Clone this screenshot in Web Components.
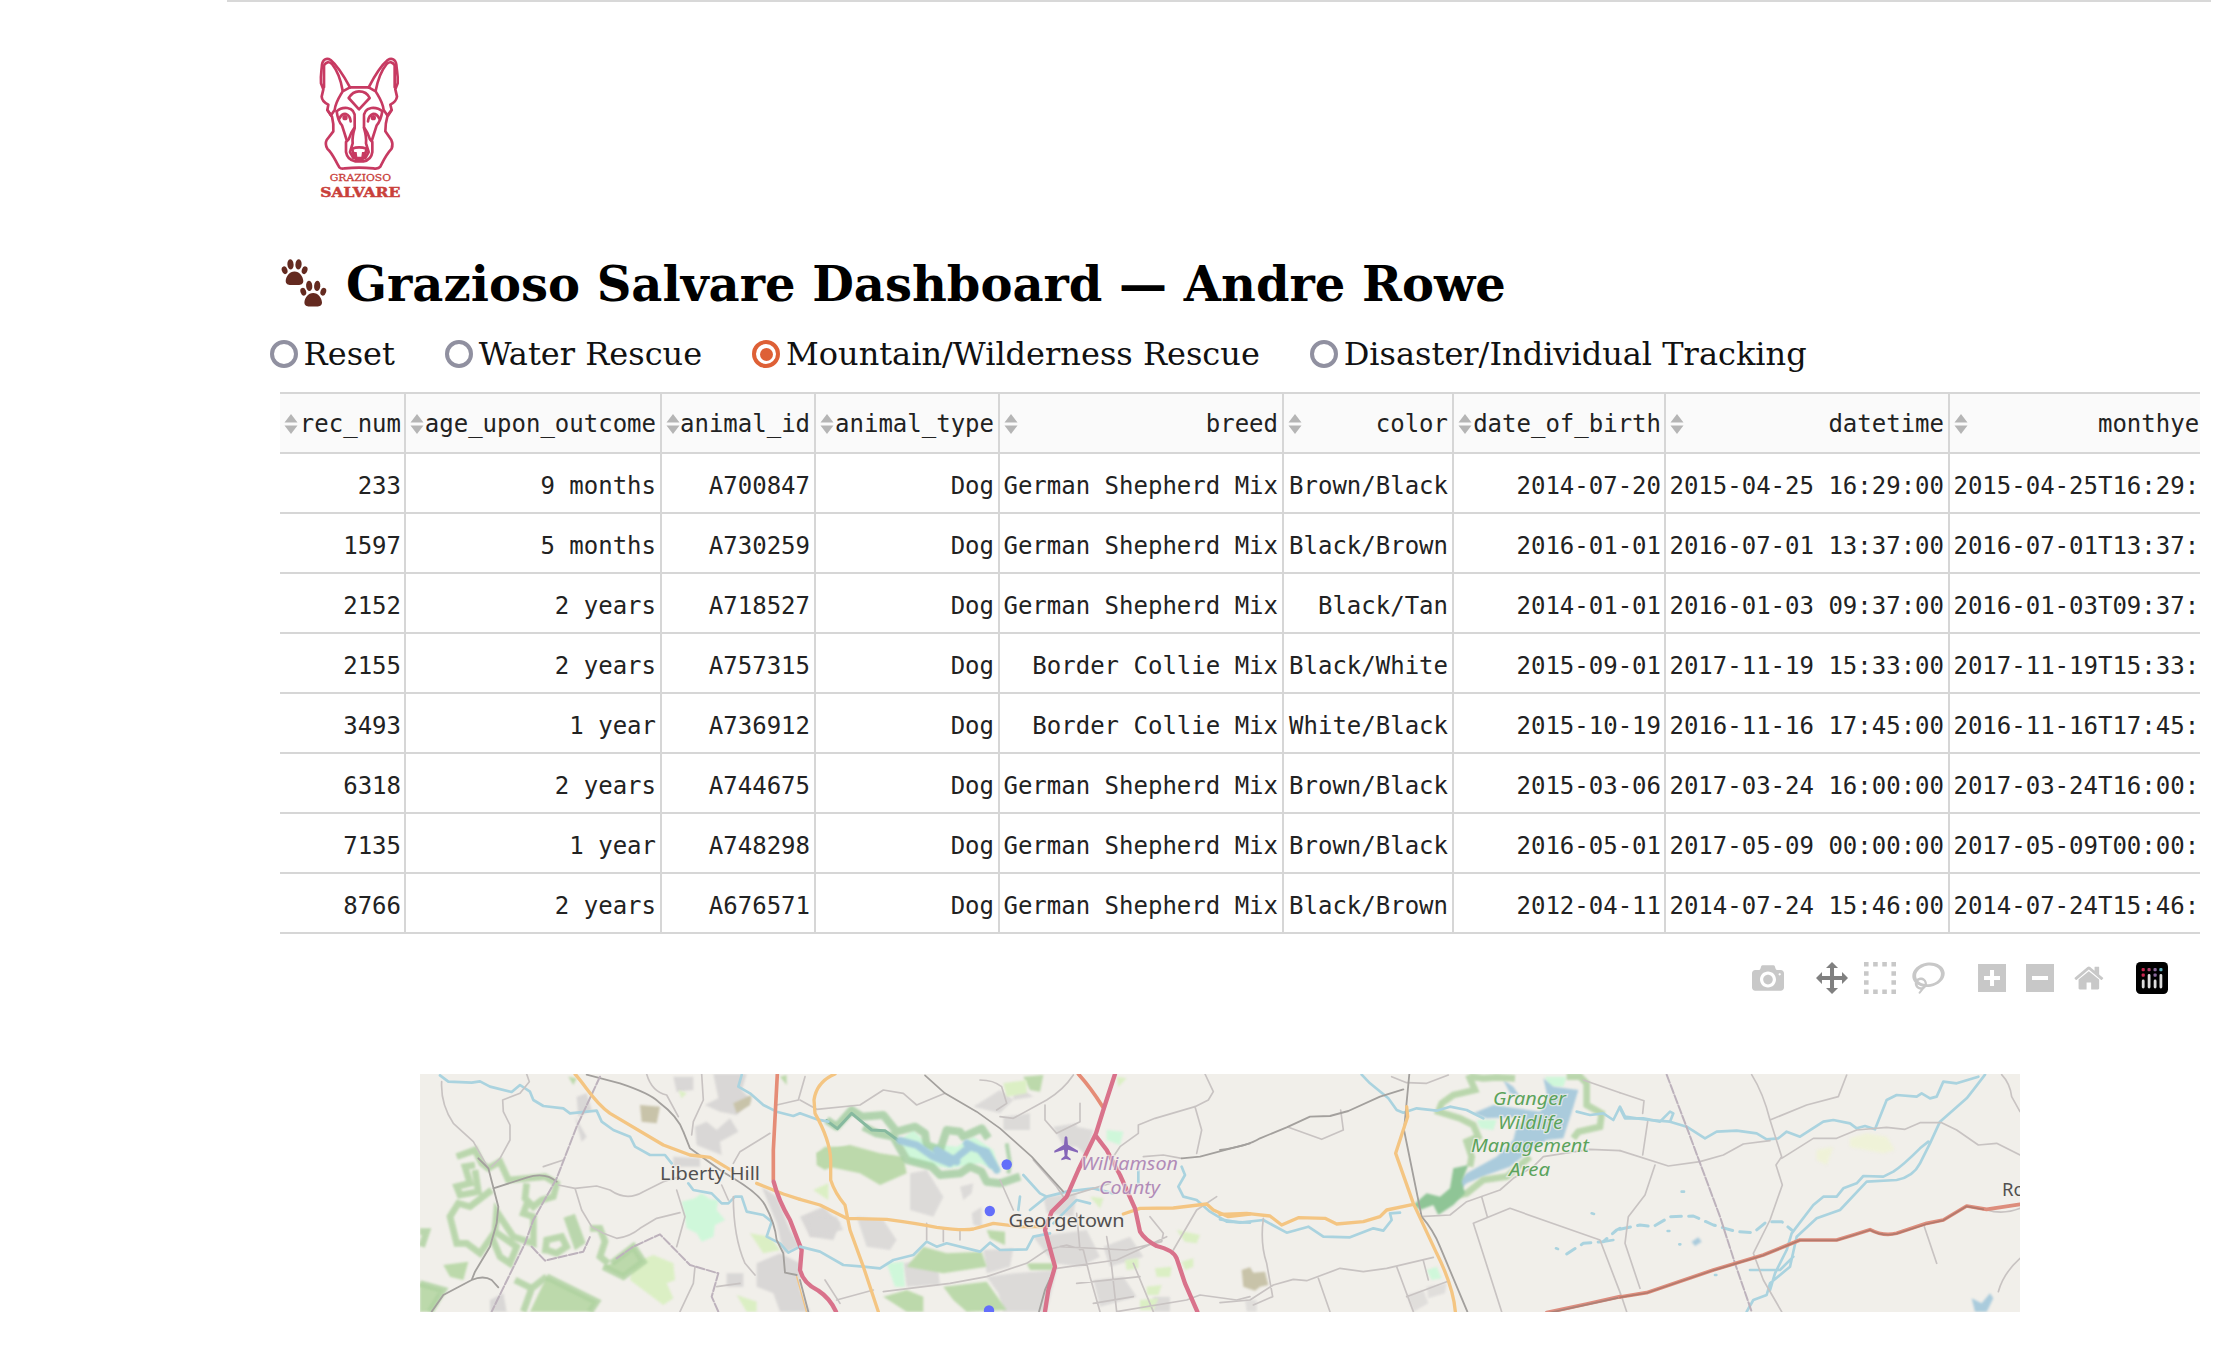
<!DOCTYPE html>
<html lang="en">
<head>
<meta charset="utf-8">
<title>Grazioso Salvare Dashboard</title>
<style>
html,body{margin:0;background:#fff;height:1348px;overflow:hidden}
</style>
</head>
<body>
<rescue-dashboard></rescue-dashboard>
<script>
const define=(name,html)=>customElements.define(name,class extends HTMLElement{
  connectedCallback(){
    if(this.shadowRoot)return;
    const root=this.attachShadow({mode:'open'});
    root.innerHTML=(typeof html==='function'?html(this):html).trim();
  }
});

/* Brand mark: shepherd head with the two-line name */
define('brand-logo',`
<style>:host{display:block;width:84px;height:146px}svg{display:block;overflow:visible}</style>
<svg width="84" height="146" viewBox="324 165 252 438">
 <g fill="none" stroke="#c73a62" stroke-width="8" stroke-linejoin="round" stroke-linecap="round">
  <path d="M420 262H476"/>
  <path d="M420 262C400 225 380 195 362 180C350 172 338 178 336 194C335 212 331 225 333 250L340 268L335 290Q336 305 355 314L352 330L363 346"/>
  <path d="M476 262C495 225 515 195 533 180C545 172 557 178 559 194C560 212 565 225 563 250L556 268L561 290Q559 305 541 314L545 330L532 346"/>
  <path d="M342 262V196Q352 180 366 192C382 212 392 236 398 272"/>
  <path d="M554 262V196Q544 180 530 192C514 212 504 236 497 272"/>
  <path d="M420 262L398 274C385 296 376 308 374 330L363 346M476 262L497 274C510 296 519 308 521 330L532 346"/>
  <path d="M352 330L366 350Q372 374 370 394L350 420Q344 432 352 446C370 462 376 484 388 502Q394 508 404 505Q447 501 490 505Q505 508 511 500C520 482 528 464 545 446Q550 432 544 420L526 394Q526 370 532 350L545 330"/>
  <path d="M447 328L416 294Q428 274 447 274Q470 274 479 294Z"/>
  <path d="M380 334Q392 322 412 324Q436 328 434 354V382Q422 398 416 418L408 426V456Q412 480 436 484H460Q484 480 487 456V426L480 418Q474 398 462 382V354Q460 328 484 324Q504 322 517 334"/>
  <path d="M380 334Q384 364 396 376L410 420M517 334Q512 364 500 376L486 420"/>
  <path d="M388 356Q396 340 408 342Q420 346 422 364M508 356Q500 340 488 342Q476 346 474 364"/>
  <path d="M434 384Q426 410 428 430L420 456L430 474M462 384Q470 410 468 430L476 456L466 474"/>
  <path d="M426 446Q447 438 470 446L462 474Q447 486 434 474L426 446Z"/>
 </g>
 <path d="M426 456L440 456L442 470H454L456 456L470 456L462 478Q447 492 434 478Z" fill="#c73a62"/>
 <circle cx="405" cy="353" r="8" fill="#c73a62"/><circle cx="490" cy="353" r="8" fill="#c73a62"/>
 <g fill="#c9403a" stroke="#c9403a" font-family="'DejaVu Serif','Liberation Serif',serif">
  <text x="359" y="543" font-size="25" stroke-width=".8" textLength="184" lengthAdjust="spacingAndGlyphs">GRAZIOSO</text>
  <text x="331" y="590" font-size="41" stroke-width="1.500" font-weight="700" textLength="240" lengthAdjust="spacingAndGlyphs">SALVARE</text>
 </g>
</svg>`);

define('paw-prints',`
<style>:host{display:block;width:48px;height:48px;flex:none}svg{display:block}</style>
<svg width="48" height="48" viewBox="0 0 48 48" fill="#642a20"><defs><g id="p">
<path d="M13.500 12.500c-5 0-8.500 5-8.800 9.500 0 3 2.500 4 5 4h7.600c2.500 0 5-1 5-4-.3-4.500-3.800-9.500-8.800-9.500z"/>
<ellipse cx="3.600" cy="11.200" rx="2.800" ry="4" transform="rotate(-18 3.600 11.200)"/>
<ellipse cx="9.500" cy="5.400" rx="3.100" ry="5.200" transform="rotate(-5 9.500 5.400)"/>
<ellipse cx="17.500" cy="5.400" rx="3.100" ry="5.200" transform="rotate(5 17.500 5.400)"/>
<ellipse cx="23.600" cy="11.200" rx="2.800" ry="4" transform="rotate(18 23.600 11.200)"/></g></defs>
<use href="#p"/><use href="#p" transform="translate(18.700 21.500)"/></svg>`);

define('page-title',`
<style>:host{display:flex;align-items:flex-start;height:60px}
paw-prints{margin:0 17px 0 0}
h1{margin:-5px 0 0;font:700 48px/60px 'DejaVu Serif',serif;color:#000;white-space:nowrap}</style>
<paw-prints></paw-prints><h1><slot></slot></h1>`);

define('radio-option',`
<style>:host{display:flex;align-items:center;height:40px;font:32px/40px 'DejaVu Serif',serif;color:#111;white-space:nowrap}
i{box-sizing:border-box;width:28px;height:28px;border:4px solid #9090a0;border-radius:50%;margin-right:5.600px;display:flex;align-items:center;justify-content:center}
:host([checked]) i{border-color:#de6036}
:host([checked]) i::after{content:"";width:13px;height:13px;border-radius:50%;background:#de6036}
span{margin-top:-1px}
</style><i></i><span><slot></slot></span>`);

define('rescue-filter',`
<style>:host{display:flex;gap:50.300px}</style>
<radio-option>Reset</radio-option><radio-option>Water Rescue</radio-option>
<radio-option checked>Mountain/Wilderness Rescue</radio-option>
<radio-option>Disaster/Individual Tracking</radio-option>`);

const COLS=[['rec_num',126],['age_upon_outcome',256],['animal_id',154],['animal_type',184],['breed',284],['color',170],['date_of_birth',212],['datetime',284],['monthyear',284]];
const G='German Shepherd Mix',B='Border Collie Mix';
const ROWS=[
['233','9 months','A700847','Dog',G,'Brown/Black','2014-07-20','2015-04-25 16:29:00'],
['1597','5 months','A730259','Dog',G,'Black/Brown','2016-01-01','2016-07-01 13:37:00'],
['2152','2 years','A718527','Dog',G,'Black/Tan','2014-01-01','2016-01-03 09:37:00'],
['2155','2 years','A757315','Dog',B,'Black/White','2015-09-01','2017-11-19 15:33:00'],
['3493','1 year','A736912','Dog',B,'White/Black','2015-10-19','2016-11-16 17:45:00'],
['6318','2 years','A744675','Dog',G,'Brown/Black','2015-03-06','2017-03-24 16:00:00'],
['7135','1 year','A748298','Dog',G,'Brown/Black','2016-05-01','2017-05-09 00:00:00'],
['8766','2 years','A676571','Dog',G,'Black/Brown','2012-04-11','2014-07-24 15:46:00']];

define('sort-arrows',`
<style>:host{display:block;width:14px;height:20px;flex:none;white-space:normal}svg{display:block}</style>
<svg width="14" height="20" viewBox="0 0 14 20" fill="#b5b5b5"><path d="M7 0L13.500 8.500H.5ZM7 20L.5 11.500H13.500Z"/></svg>`);

define('animal-table',()=>`
<style>
:host{display:block;width:1920px;overflow:hidden;border-top:2px solid #d6d6d6}
.grid{display:grid;grid-template-columns:${COLS.map(c=>c[1]+'px').join(' ')};grid-template-rows:repeat(9,60px);width:max-content;
 font:24px/28px 'DejaVu Sans Mono',monospace;color:#222}
.c{box-sizing:border-box;border-bottom:2px solid #d6d6d6;border-right:2px solid #d6d6d6;padding:5px 4px 0 4px;display:flex;align-items:center;justify-content:flex-end;white-space:nowrap}
.c:nth-child(9n+1),.c:nth-child(9n+7){padding-right:3px}
.h{background:#fafafa;justify-content:space-between;padding-top:2px}
</style>
<div class="grid">${COLS.map(c=>`<div class="c h"><sort-arrows></sort-arrows><span>${c[0]}</span></div>`).join('')}${
ROWS.map(r=>[...r,r[7].replace(' ','T')].map(v=>`<div class="c">${v}</div>`).join('')).join('')}</div>`);

const FLIP='transform="matrix(1 0 0 -1 0 850)"';
const ICONS={
camera:[1000,'m500 450c-83 0-150-67-150-150 0-83 67-150 150-150 83 0 150 67 150 150 0 83-67 150-150 150z m400 150h-120c-16 0-34 13-39 29l-31 93c-6 15-23 28-40 28h-340c-16 0-34-13-39-28l-31-94c-6-15-23-28-40-28h-120c-55 0-100-45-100-100v-450c0-55 45-100 100-100h800c55 0 100 45 100 100v450c0 55-45 100-100 100z m-400-550c-138 0-250 112-250 250 0 138 112 250 250 250 138 0 250-112 250-250 0-138-112-250-250-250z m365 380c-19 0-35 16-35 35 0 19 16 35 35 35 19 0 35-16 35-35 0-19-16-35-35-35z'],
pan:[1000,'m1000 350l-187 188 0-125-250 0 0 250 125 0-188 187-187-187 125 0 0-250-250 0 0 125-188-188 186-187 0 125 252 0 0-250-125 0 187-188 188 188-125 0 0 250 250 0 0-126 187 188z'],
box:[1000,'m0 850l0-143 143 0 0 143-143 0z m286 0l0-143 143 0 0 143-143 0z m285 0l0-143 143 0 0 143-143 0z m286 0l0-143 143 0 0 143-143 0z m-857-286l0-143 143 0 0 143-143 0z m857 0l0-143 143 0 0 143-143 0z m-857-285l0-143 143 0 0 143-143 0z m857 0l0-143 143 0 0 143-143 0z m-857-286l0-143 143 0 0 143-143 0z m286 0l0-143 143 0 0 143-143 0z m285 0l0-143 143 0 0 143-143 0z m286 0l0-143 143 0 0 143-143 0z'],
lasso:[1031,'m1018 538c-36 207-290 336-568 286-277-48-473-256-436-463 10-57 36-108 76-151-13-66 11-137 68-183 34-28 75-41 114-42l-55-70 0 0c-2-1-3-2-4-3-10-14-8-34 5-45 14-11 34-8 45 4 1 1 2 3 2 5l0 0 113 140c16 11 31 24 45 40 4 3 6 7 8 11 48-3 100 0 151 9 278 48 473 255 436 462z m-624-379c-80 14-149 48-197 96 42 42 109 47 156 9 33-26 47-66 41-105z m-187-74c-19 16-33 37-39 60 50-32 109-55 174-68-42-25-95-24-135 8z m360 75c-34-7-69-9-102-8 8 62-16 128-68 170-73 59-175 54-244-5-9 20-16 40-20 61-28 159 121 317 333 354s407-60 434-217c28-159-121-318-333-355z'],
plus:[875,'m1 787l0-875 875 0 0 875-875 0z m687-500l-187 0 0-187-125 0 0 187-188 0 0 125 188 0 0 187 125 0 0-187 187 0 0-125z'],
minus:[875,'m0 788l0-876 875 0 0 876-875 0z m688-500l-500 0 0 125 500 0 0-125z'],
home:[928.6,'m786 296v-267q0-15-11-26t-25-10h-214v214h-143v-214h-214q-15 0-25 10t-11 26v267q0 1 0 2t0 2l321 264 321-264q1-1 1-4z m124 39l-34-41q-5-5-12-6h-2q-7 0-12 3l-386 322-386-322q-7-4-13-4-7 2-12 7l-35 41q-4 5-3 12t6 11l401 334q18 15 42 15t43-15l136-114v109q0 8 5 13t13 5h107q8 0 13-5t5-13v-227l122-102q5-5 6-12t-4-11z']};
define('mode-icon',el=>{
 const n=el.getAttribute('name');
 const css='<style>:host{display:block;height:32px}svg{display:block}</style>';
 if(n==='plotly')return css+`<svg width="32" height="32" viewBox="0 0 32 32"><rect width="32" height="32" rx="4.500"/>
 <g fill="#c8274f"><rect x="5.600" y="6" width="3.200" height="3.200" rx="1"/><rect x="5.600" y="11.500" width="3.200" height="3.200" rx="1"/></g>
 <rect x="11.500" y="6" width="3.200" height="3.200" rx="1" fill="#b0446f"/><rect x="17.500" y="6" width="3.200" height="3.200" rx="1" fill="#8a6a9c"/><rect x="17.500" y="11.500" width="3.200" height="3.200" rx="1" fill="#8a6a9c"/><rect x="23.300" y="6" width="3.200" height="3.200" rx="1" fill="#5fb0c0"/>
 <path d="M7.200 19V25M13.100 13.300V25M19.100 19V25M24.900 13.300V25" stroke="#ddd" stroke-width="2.800" stroke-linecap="round"/></svg>`;
 const [w,d]=ICONS[n];
 return css+`<svg width="${w*.032}" height="32" viewBox="0 0 ${w} 1000" fill="${n==='pan'?'#808080':'#c8c8c8'}"><path d="${d}" ${FLIP}/></svg>`;
});
define('mode-bar',`
<style>:host{display:flex;justify-content:flex-end;gap:32px}div{display:flex;gap:16px}.z{gap:20px;margin-left:1px}</style>
<div><mode-icon name="camera"></mode-icon></div>
<div><mode-icon name="pan"></mode-icon><mode-icon name="box"></mode-icon><mode-icon name="lasso"></mode-icon></div>
<div class="z"><mode-icon name="plus"></mode-icon><mode-icon name="minus"></mode-icon><mode-icon name="home"></mode-icon></div>
<div><mode-icon name="plotly"></mode-icon></div>`);

/* Street map, drawn in four tiles of one third pixel units */
define('outcome-map',`
<style>
:host{display:block;width:1600px;height:238px;overflow:hidden}
svg{display:block;background:#f1efea}
path{fill:none;stroke-linejoin:round;stroke-linecap:round}
.w{stroke:#aad3df;stroke-width:8}.wa{fill:#aacbdc}
.y{stroke:#f4c582;stroke-width:10}.r{stroke:#d9728b;stroke-width:13}.o{stroke:#e58c76;stroke-width:11}
.k{stroke:#a3a09d;stroke-width:5.500}.g{stroke:#c8c3c2;stroke-width:5}.d{stroke:#bdb2bc;stroke-width:6;stroke-dasharray:26 7}
.gr{stroke:#add19e;stroke-width:20;stroke-linejoin:miter;stroke-linecap:butt;opacity:.8}.gf{fill:#bcd9ab}.lf{fill:#dbefc4}.u{fill:#d9d7d6}.m{fill:#cff7da}.b{fill:#c8c3a9}
.gr,.gf,.lf,.u,.m,.b,.wa{filter:blur(2.500px)}
text{font-family:'Noto Sans','Open Sans',sans-serif}
</style>
<svg width="1600" height="238" viewBox="420 1074 1600 238">
<g transform="translate(400 1050) scale(.33333)">
 <path class="u" d="M940 72H1040L1025 120L1055 150L1010 195L960 185L915 165L955 145ZM885 230L920 215L950 240L990 205L1015 245L960 275L965 315L890 285ZM820 320L900 325L900 350H820ZM1085 410L1130 440L1170 540L1200 590L1150 610L1130 520ZM1200 500L1270 470L1320 520L1300 570L1230 560ZM1070 640L1140 610L1200 640V720L1230 785H1140L1120 730L1070 710ZM820 80H880V120L830 125ZM530 140L560 130L575 180L535 200ZM525 200L560 260L545 275ZM270 750L310 730L320 785H270ZM980 670H1030V710H980Z"/>
 <path class="b" d="M720 165L780 170L770 220L725 215ZM1000 160L1055 135L1050 165L1010 190Z"/>
 <path class="m" d="M845 455L885 445L905 430L930 448L955 450L950 480L975 510L945 525L940 560L905 575L890 550L860 535Z"/>
 <path class="lf" d="M700 640L760 615L820 640L825 690L800 700L820 745L790 765L750 735L690 690ZM1010 735L1070 755V785H1040ZM1050 550L1110 560L1140 600L1090 610ZM1240 420L1285 400V450ZM835 120L860 130L845 145Z"/>
 <path class="gf" d="M440 680L590 755L570 785H390ZM60 700L130 720L90 785H60ZM635 640L700 590L730 635L670 680L610 650ZM130 645L205 635L190 690L150 680ZM1250 310L1275 290L1350 290V320L1275 360L1250 345ZM505 80L530 85L520 105ZM1140 80L1160 75V105Z"/>
 <path class="gr" d="M170 320L225 300L245 340L265 355L300 335L325 390L435 380L470 400L460 440L425 450L400 470L375 445L380 400M225 345L195 350L210 400L170 410L180 435L235 425L225 360M275 420L210 470L175 460L150 500L170 580L200 580L240 610L275 560L300 620L330 640L350 590L285 545L290 485L310 515L340 560L400 580V500L370 490L385 450M435 610L440 570L485 560L500 590L470 610L440 600M500 500L530 585L545 575L515 495M570 535H600L615 575L600 620L625 640M60 545L80 545L65 590M345 690L395 715L370 785M395 715L440 680M440 680L590 755L570 785M60 700L130 720L90 785M635 640L700 590L730 635L670 680L610 650"/>
 <path class="w" d="M120 76L145 95L215 98L240 94L270 110L335 126L360 105L390 125L400 150L430 168L490 175L510 190L590 182L605 215L640 240L690 260L705 290L750 315L795 315L815 340M865 400L880 420L935 430L965 460H985L1005 440H1025L1040 485L1090 495L1115 515L1100 560L1140 580L1165 608L1200 590M1025 75L1015 110L1050 130L1090 165L1130 185L1180 198L1200 190"/>
 <path class="g" d="M125 95C122 150 140 190 160 220L220 275L265 355M380 72L388 95L360 130L308 150L310 185L330 225V270L300 325L275 350M475 405L525 415L590 408L630 420Q680 455 730 425L790 395L840 380M525 415L545 480L575 530L610 550L650 565Q690 560 720 535L770 505L840 488M740 72Q755 125 800 135L835 200M905 72L910 150L880 215L875 255M1215 80L1195 150L1130 165M1000 340L1020 305L1110 250M830 420L855 500L830 590M1000 440Q1000 560 1035 640L1065 675M950 710L1020 700M885 650L880 700L840 785M965 405L985 450M430 350L490 330"/>
 <path class="k" d="M560 74L660 100Q750 130 775 155Q835 200 850 245L870 295L960 360L1000 385Q1075 430 1095 465Q1125 520 1130 570L1150 610L1155 668L1190 675M280 415L380 383Q435 365 470 395M235 325L265 355L295 470L290 520L270 590L225 665L215 690L130 735L95 785M215 690Q250 675 275 690L295 712"/>
 <path class="d" d="M600 80L530 230L470 385L400 510L375 580L275 785M395 590L435 632L550 605L570 560M650 625L700 590L780 553L870 645L955 670L935 740L955 785"/>
 <path class="y" d="M525 72C560 110 580 155 630 190L790 285L870 315L930 322L1000 365M1070 400L1150 432L1200 448"/>
 <path class="k" d="M1200 690L1225 785"/><path class="y" style="stroke-width:4" d="M1190 680L1219 785"/>
 <path class="o" d="M1132 72L1120 300V390"/><path class="r" d="M1121 395Q1135 450 1170 510L1205 600L1200 660Q1210 700 1255 722Q1290 745 1308 785"/>
</g>
<g transform="translate(800 1050) scale(.33333)">
 <path class="u" d="M330 370L380 360L430 440L400 500L330 480ZM480 410L520 400L515 430L490 450ZM515 490L545 470V530L520 525ZM170 500L250 510L290 570L270 600L200 590ZM550 600L640 595L630 650L560 670ZM310 640L410 620L420 705L320 710ZM560 680L640 670L770 660L740 785H610L595 730ZM640 100L700 140L640 150ZM610 200L690 190V240L610 240ZM20 495L110 500L130 540L30 560ZM700 560L860 540L900 620L840 650L760 640ZM830 230L880 240L860 320L820 280ZM730 440L830 430L820 500L740 490ZM910 590L990 560L1030 620L930 650ZM880 690L970 680L1010 740L900 770ZM520 170L600 120L640 150L600 190ZM760 230L830 220V290H790ZM1060 740L1110 740V785H1060Z" opacity=".85"/>
 <path class="gf" d="M50 310L150 285L240 310L310 320L320 370L240 405L180 370L60 345ZM370 590L440 610L545 605L560 650L430 670L320 650ZM430 710L560 695L620 780L500 785L460 750ZM670 80L730 75L720 125L690 120ZM560 540L615 545V585L570 565ZM250 740L320 720L370 740V785H320ZM680 640L760 640V660H690Z"/>
 <path class="m" d="M300 270L340 240L380 280L470 290L520 260L580 300L600 370L540 340L450 355L330 340ZM920 240L970 245L960 285L920 270ZM260 640L310 635L315 710H285Z"/>
 <path class="lf" d="M975 630L1015 625L1015 655L980 660ZM1065 655L1115 650L1110 680L1070 680ZM1040 710L1085 705L1075 735H1040ZM1020 750L1075 745L1060 780H1020ZM1130 540L1200 555L1190 580L1155 575ZM1145 635L1180 625V650L1155 660ZM870 440L910 445L900 475ZM950 80L980 85L955 110ZM610 100L680 90V130L620 140Z"/>
 <path class="gr" style="stroke:#a2cda0;stroke-width:24;stroke-linejoin:round" d="M80 210L110 230L155 180L185 200L250 195L290 245L345 230L375 250L380 285L420 300L440 240L480 245L490 260L545 235L565 265M190 230L230 250L280 260L320 330L395 350L420 375L480 370L510 350L545 365L560 395L600 400L660 380"/>
 <path class="gr" style="stroke:#a2cda0;stroke-width:12" d="M620 280L630 340L625 370"/>
 <path style="stroke:#86b99f;stroke-width:9" d="M80 212L112 236L155 190L215 240L255 242L300 275"/>
 <path style="stroke:#a4cbdc;stroke-width:22;filter:blur(2.500px)" d="M300 272L350 285L400 320L450 340L485 310L510 290L560 305L590 360M410 300L470 335M500 280L540 300L575 345"/>
 <path class="w" d="M0 190L50 208L85 215M670 375L720 430L740 440L800 425L880 415L940 430M660 440L655 480M740 440L690 480M0 590L60 605L130 645L190 650L240 655L280 630L340 615L380 575L410 590L440 580L540 605L570 578L600 600L680 598L700 560L750 550M1145 350L1155 375L1135 410L1150 440L1190 450L1230 485L1280 515L1350 518M760 520L830 450L870 460M1015 360V400"/>
 <path class="g" d="M0 150L50 178L180 165L250 120L310 130L350 165L435 130M540 90Q580 90 605 110L620 160L590 180M820 75Q790 120 740 150L640 205L600 200M735 165V210L770 250L840 215V160M1215 72L1240 125L1225 150L1185 170L1065 205L1015 225V250L960 290L940 320M1185 170L1205 240L1190 310M600 390L640 480M700 330L770 410L790 440M250 725L450 700L560 680L680 640L740 600L800 585L850 600L870 680L900 785M770 655L950 630L1100 560M920 560L935 650L950 785M830 490L840 600M1050 500L1090 550L1085 575L980 600L780 590M1120 600L1190 480L1250 440M930 400L800 440M1000 640L1060 785M110 750L220 720M75 690L120 760M380 520V570M430 535V575M480 540V570M950 785L1160 750L1200 735L1310 750L1350 740M830 700L1020 680M880 760L1000 740M1030 320L1090 315L1145 325"/>
 <path class="k" style="stroke-width:5" d="M375 76L435 130L530 185L600 235L695 320L790 425M1145 325L1200 320L1350 280"/>
 <path class="y" d="M105 72Q50 95 42 150L45 190Q90 270 92 330V390Q105 430 135 465L150 540L190 650L235 785M0 448L60 465L140 505L260 508Q350 520 410 532Q490 543 520 537L580 520L660 530H740M970 492L1020 475L1120 474L1220 462L1240 480L1285 500L1350 492"/>
 <path class="o" d="M835 72Q870 110 908 170"/>
 <path class="k" d="M762 660L735 720L717 785"/>
 <path class="r" d="M945 72L910 180L888 250L835 360L800 440L755 485L735 540L765 650L745 720L735 785M888 258L920 300L960 375L1005 475L1020 545Q1035 570 1070 588Q1120 600 1130 625L1155 700L1192 785"/>
 <path style="fill:#8566b8" d="M794 262Q798 256 802 262L804 284L834 302V308L804 299L802 318L812 326V331L798 327L784 331V326L794 318L792 299L763 308V302L792 284Z"/>
</g>
<g transform="translate(1220 1050) scale(.33333)">
 <path class="b" d="M65 660L90 652L100 668L135 665L145 705L120 710L105 722L70 710Z"/>
 <path class="m" d="M620 660L650 650L665 685L635 690ZM770 210L830 210L820 240L780 235ZM975 80H1040L1030 110H985Z"/>
 <path class="u" d="M560 735L610 720L625 760L580 785ZM620 710L680 700L675 730L625 745ZM75 750H110V785H80Z" opacity=".7"/>
 <path class="wa" d="M970 85L1000 110L1075 120L1060 170L1030 265L980 270L920 310L870 350L800 375L740 400L720 420L700 410L740 370L830 320L880 270L890 230L920 200L800 205L760 190L820 165L960 185L985 150ZM850 90L880 110L900 140L870 130Z"/>
 <path class="gr" d="M745 75L765 120L700 135L665 160L655 185L720 205L760 225L775 260L740 275L755 320L750 350M750 80L790 85L830 82L885 85M1040 80L1080 80L1100 100V165L1145 190L1140 230L1075 245L1060 265M740 270L760 290M930 320L860 380L790 390L740 430L690 440"/>
 <path class="gf" style="fill:#8fc596" d="M580 465L620 430L660 440L690 415L700 355L745 345L725 395L735 430L700 465L655 495L640 465L600 480Z"/>
 <path class="w" d="M425 74L450 100L505 145L530 180L550 188L590 175L650 182L690 170L740 180L790 205M1070 185L1110 195L1150 190L1180 210L1200 170L1215 200L1250 205L1290 210L1350 215M0 508L60 518L130 510L200 548L265 530L310 560L390 562L460 535L490 542L515 510L510 490L540 488"/>
 <path class="w" style="stroke-width:9;stroke-dasharray:30 22" d="M1040 612L1090 580L1150 575L1190 540L1200 535"/><path class="w" d="M1115 490L1122 492M1008 595L1014 597M1150 575L1180 570"/>
 <path class="g" d="M205 232L305 268L370 240L362 180M515 80L560 98L620 100L685 75M130 505Q120 580 140 640L158 740L100 765M0 758L90 750L160 705L220 688L260 692L360 655L430 665L500 655L640 622M295 685L330 785M530 650L580 785M610 632L625 690M560 740L680 695M600 500L690 495L740 455L840 420L880 385L940 350L970 320L1110 298L1200 302M785 440L802 500M845 785L760 520L870 475L1140 570L1205 740L1220 785M1090 90L1200 128"/>
 <path class="k" d="M0 300Q80 290 120 265L200 232L270 200L330 198L385 183L480 140L550 118M568 72L552 240L605 500Q640 540 660 590L742 785"/>
 <path class="y" d="M560 170L563 200L548 245L527 310L580 460L650 610Q700 710 706 785M0 493L80 490L150 498L185 525L235 503L315 505L350 522L430 515L480 500L500 480L580 463"/>
 <path class="o" style="stroke:#dc8d7f" d="M980 788L1100 762L1200 740"/><path class="k" style="stroke:#ad8076;stroke-width:5" d="M980 790L1100 764L1200 742"/>
</g>
<g transform="translate(1620 1050) scale(.33333)">
 <path style="fill:#eff2d8;filter:blur(5px)" d="M590 300L640 290L620 345L590 330ZM690 265L740 250L800 260L825 300L790 310L690 290Z"/>
 <path class="wa" d="M1055 745L1085 760L1110 730L1120 745L1100 785H1065ZM215 575L235 562L245 575L225 588Z"/>
 <path class="w" d="M0 175L15 205H70L120 215L150 185L160 190L150 215L200 230L255 265L290 245L350 242L410 250L440 268L475 265L500 245L540 260L610 215L640 210L690 220L710 235L735 228L765 238L800 150L830 135L890 140L905 130L930 145L950 140L970 95L1010 100L1075 80M1095 74Q1060 120 1040 145L960 215L930 280L900 340Q880 380 830 390L740 395L660 480L590 505L530 560L510 650L450 700L440 735L400 750L380 785M925 275L900 295Q850 345 820 365L790 380L730 378L710 400L670 415L650 440L610 440L580 465L515 550L500 600L465 670L450 720M390 660H480L520 620"/>
 <path class="w" style="stroke-width:9;stroke-dasharray:32 22" d="M0 538L60 525L100 530L150 500L220 498L280 525L350 545L400 548L440 515L485 515L515 540"/>
 <path class="w" d="M185 425H192M143 543H148M178 583H181M285 675H289"/>
 <path class="g" d="M395 74Q430 130 450 210L485 320L468 345L487 405L450 510L400 610L430 690L485 785M450 210L560 165L655 140L680 75M485 325L580 265L650 265L710 240L800 232L855 238L900 218H965L1010 240L1075 285L1130 280L1200 315M0 302L145 348L240 335L310 315L370 282L450 272M0 128L72 152L68 190M83 215L68 315M105 345L75 435L25 500L15 580L60 715M1145 74Q1170 100 1175 140L1200 185M913 530L950 640M1200 625Q1150 670 1135 725M1100 480Q1150 495 1200 475"/>
 <path class="d" d="M140 74L205 245L300 500L345 640L395 785"/>
 <path class="o" style="stroke:#dd8d7c" d="M0 741L80 728L280 660L430 615L540 570H650Q700 555 750 539Q790 560 830 550L920 520L970 510L1040 468L1100 478L1200 463"/>
 <path class="k" style="stroke:#b3796c;stroke-width:5" d="M0 742L80 729L280 661L430 616L540 571H650Q700 556 750 540Q790 561 830 551L920 522L970 511L1040 469L1090 478"/>
</g>
<g fill="#525050" stroke="#f1efea" stroke-opacity=".7" stroke-width="2.500" paint-order="stroke" font-size="18.500">
 <text x="660" y="1180" textLength="100" lengthAdjust="spacingAndGlyphs">Liberty Hill</text>
 <text x="1008.500" y="1227" textLength="116" lengthAdjust="spacingAndGlyphs">Georgetown</text>
 <text x="2002" y="1196">Ro</text>
 <g fill="#b18bb8" font-style="italic"><text x="1081" y="1170" textLength="97" lengthAdjust="spacingAndGlyphs">Williamson</text><text x="1099" y="1194" textLength="61" lengthAdjust="spacingAndGlyphs">County</text></g>
 <g fill="#5ba35c" font-style="italic"><text x="1493" y="1105" textLength="73" lengthAdjust="spacingAndGlyphs">Granger</text><text x="1498" y="1129" textLength="65" lengthAdjust="spacingAndGlyphs">Wildlife</text><text x="1471" y="1152" textLength="118" lengthAdjust="spacingAndGlyphs">Management</text><text x="1509" y="1176" textLength="41" lengthAdjust="spacingAndGlyphs">Area</text></g>
</g>
<g fill="#636efa"><circle cx="1006.700" cy="1164.500" r="5.200"/><circle cx="989.800" cy="1211" r="5.200"/><circle cx="989" cy="1310.500" r="5.200"/></g>
</svg>`);

define('rescue-dashboard',`
<style>
:host{display:flex;flex-direction:column;align-items:flex-start;width:2232px;height:1348px;box-sizing:border-box}
hr{box-sizing:border-box;width:1984px;height:2px;margin:0 0 0 227px;border:0;background:#d8d8d8}
brand-logo{margin:53px 0 0 318px}
page-title{margin:58px 0 0 281px}
rescue-filter{margin:15px 0 0 270px}
animal-table{margin:18px 0 0 280px}
mode-bar{margin:28px 0 0;width:2168px}
outcome-map{margin:80px 0 0 420px}
</style>
<hr><brand-logo></brand-logo>
<page-title>Grazioso Salvare Dashboard — Andre Rowe</page-title>
<rescue-filter></rescue-filter>
<animal-table></animal-table>
<mode-bar></mode-bar>
<outcome-map></outcome-map>`);
</script>
</body>
</html>
